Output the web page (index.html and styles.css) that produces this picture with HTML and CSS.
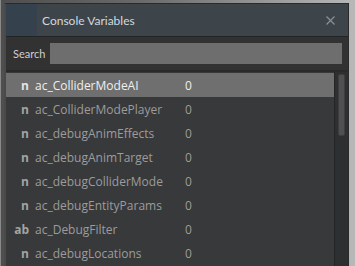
FILE: index.html
```html
<!DOCTYPE html>
<html>
<head>
<meta charset="utf-8">
<link rel="stylesheet" href="styles.css">
</head>
<body>
<div class="frame">
  <div class="window">
    <div class="titlebar">
      <div class="title-icon"></div>
      <div class="title">Console Variables</div>
      <div class="close">
        <svg width="9" height="9" viewBox="0 0 9 9"><path d="M0.5 0.5L8.5 8.5M8.5 0.5L0.5 8.5" stroke="#8a9098" stroke-width="1.2"/></svg>
      </div>
    </div>
    <div class="searchbar">
      <span class="search-label">Search</span>
      <div class="search-input"></div>
    </div>
    <div class="listwrap">
      <div class="list">
        <div class="row selected"><span class="type">n</span><span class="name">ac_ColliderModeAI</span><span class="val">0</span></div>
        <div class="row"><span class="type">n</span><span class="name">ac_ColliderModePlayer</span><span class="val">0</span></div>
        <div class="row"><span class="type">n</span><span class="name">ac_debugAnimEffects</span><span class="val">0</span></div>
        <div class="row"><span class="type">n</span><span class="name">ac_debugAnimTarget</span><span class="val">0</span></div>
        <div class="row"><span class="type">n</span><span class="name">ac_debugColliderMode</span><span class="val">0</span></div>
        <div class="row"><span class="type">n</span><span class="name">ac_debugEntityParams</span><span class="val">0</span></div>
        <div class="row"><span class="type">ab</span><span class="name">ac_DebugFilter</span><span class="val">0</span></div>
        <div class="row"><span class="type">n</span><span class="name">ac_debugLocations</span><span class="val">0</span></div>
      </div>
      <div class="scrollbar"><div class="thumb"></div></div>
    </div>
  </div>
</div>
</body>
</html>
```

FILE: styles.css
```css
html, body {
  margin: 0;
  padding: 0;
  width: 355px;
  height: 266px;
  overflow: hidden;
}
body {
  background: linear-gradient(90deg, #4e4e4e 0%, #6a6a6a 40%, #b8b8b8 100%);
  font-family: "Open Sans", "Noto Sans", sans-serif;
}
.frame {
  height: 266px;
  padding: 3px 6px 0 3px;
  box-sizing: border-box;
  border-left: 1px solid #8a8a8a;
}
.window {
  height: 263px;
  border-left: 2px solid #4a4a4a;
  border-top: 1px solid #2a2a2a;
  border-right: 1px solid #2a2a2a;
  background: #38393b;
  display: flex;
  flex-direction: column;
  overflow: hidden;
}
.titlebar {
  height: 32px;
  flex: none;
  display: flex;
  align-items: center;
  background: #3d444a;
  border-bottom: 1px solid #222426;
}
.title-icon {
  width: 31px;
  height: 32px;
  background: #35414c;
}
.title {
  flex: 1;
  padding-left: 5px;
  color: #d4d8dc;
  font-family: "Lato", "Open Sans", sans-serif;
  font-size: 12px;
}
.close {
  width: 9px;
  height: 9px;
  margin-right: 13px;
  display: flex;
}
.searchbar {
  height: 33px;
  flex: none;
  display: flex;
  align-items: center;
  background: #323232;
  border-bottom: 2px solid #2a2a2a;
  padding-left: 7px;
  padding-right: 6px;
}
.search-label {
  color: #cfcfcf;
  font-family: "Lato", "Open Sans", sans-serif;
  font-size: 11px;
  width: 37px;
}
.search-input {
  flex: 1;
  height: 21px;
  background: #6e6e6e;
}
.listwrap {
  flex: 1;
  display: flex;
}
.list {
  flex: 1;
  padding-top: 1px;
}
.row {
  height: 24px;
  display: flex;
  align-items: center;
  color: #9c9c9c;
  font-size: 12px;
}
.row.selected {
  background: #6e6f6e;
  color: #efefef;
}
.type {
  width: 23px;
  text-align: right;
  font-weight: bold;
  color: #a4a4a4;
  padding-right: 6px;
}
.row.selected .type {
  color: #e4e4e4;
}
.name {
  width: 150px;
}
.val {
  flex: 1;
}
.scrollbar {
  width: 14px;
  background: #2e2f30;
  border-left: 1px solid #252525;
  padding: 2px 3px 0 3px;
  box-sizing: border-box;
}
.thumb {
  height: 60px;
  background: #4f5050;
  border-radius: 2px;
  border: 1px solid #3e3e3e;
}
```
